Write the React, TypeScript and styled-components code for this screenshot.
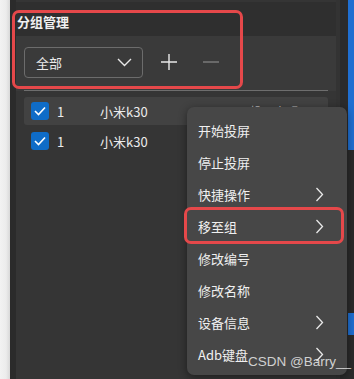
import { createGlobalStyle } from 'styled-components';
import styled from 'styled-components';

const GlobalStyle = createGlobalStyle`
  html, body {
    margin: 0;
    padding: 0;
    background: #ededed;
    font-family: "Microsoft YaHei", "Noto Sans CJK SC", "Noto Sans", sans-serif;
  }
`;

const Page = styled.div`
  position: relative;
  width: 354px;
  height: 379px;
  display: flex;
  overflow: hidden;
`;

const Gutter = styled.div`
  width: 10px;
  background: linear-gradient(to right, #f2f2f2 0%, #ececec 60%, #d8d8d8 100%);
`;

const Window = styled.div`
  flex: 1;
  display: flex;
  background: #2b2b2b;
  padding-left: 6px;
`;

const Panel = styled.div`
  width: 320px;
  display: flex;
  flex-direction: column;
  background: #3a3a3a;
`;

const Header = styled.div`
  height: 36px;
  background: #2f2f2f;
  display: flex;
  align-items: flex-end;
  padding: 0 0 4px 1px;
  box-sizing: border-box;
  border-top: 2px solid #353535;
`;

const Title = styled.div`
  color: #f0f0f0;
  font-size: 13px;
  font-weight: bold;
  line-height: 20px;
`;

const Controls = styled.div`
  height: 52px;
  display: flex;
  align-items: center;
  padding-left: 8px;
  gap: 10px;
  box-sizing: border-box;
`;

const Combo = styled.div`
  width: 119px;
  height: 31px;
  box-sizing: border-box;
  border: 1px solid #6c6c6c;
  border-radius: 4px;
  display: flex;
  align-items: center;
  justify-content: space-between;
  padding: 0 10px 0 11px;
  color: #eaeaea;
  font-size: 13px;
`;

const IconButton = styled.div<{ $dim?: boolean }>`
  width: 32px;
  height: 31px;
  display: flex;
  align-items: center;
  justify-content: center;
  color: ${(p) => (p.$dim ? '#8a8a8a' : '#e8e8e8')};
`;

const Divider = styled.div`
  height: 1px;
  margin: 2px 8px 0 8px;
  background: #6e6e6e;
`;

const List = styled.div`
  display: flex;
  flex-direction: column;
  gap: 2px;
  padding: 6px 8px 0 8px;
  background: #353535;
  flex: 1;
`;

const Row = styled.div<{ $hover?: boolean }>`
  height: 28px;
  display: flex;
  align-items: center;
  padding-left: 7px;
  border-radius: 3px;
  background: ${(p) => (p.$hover ? '#424242' : 'transparent')};
  color: #ececec;
  font-size: 13px;
  position: relative;
`;

const Check = styled.div`
  width: 18px;
  height: 18px;
  border-radius: 3px;
  background: #0f6cc7;
  display: flex;
  align-items: center;
  justify-content: center;
`;

const Num = styled.span`
  margin-left: 8px;
  width: 43px;
`;

const Status = styled.span`
  position: absolute;
  left: 226px;
  color: #bdbdbd;
  font-size: 12px;
`;

const RightRail = styled.div`
  flex: 1;
  display: flex;
  background: #2b2b2b;
  border-left: 4px solid #333333;
`;

const Blue = styled.div`
  margin-left: auto;
  width: 6px;
  display: flex;
  flex-direction: column;
`;

const BlueSeg = styled.div<{ $h: number; $on?: boolean }>`
  height: ${(p) => p.$h}px;
  background: ${(p) => (p.$on ? '#1f6fd1' : 'transparent')};
`;

const Menu = styled.div`
  position: absolute;
  left: 187px;
  top: 107px;
  width: 160px;
  height: 268px;
  box-sizing: border-box;
  padding-top: 7px;
  background: #474747;
  border-radius: 7px;
  box-shadow: 0 2px 8px rgba(0, 0, 0, 0.45);
  display: flex;
  flex-direction: column;
`;

const MenuItem = styled.div`
  height: 32px;
  display: flex;
  align-items: center;
  justify-content: space-between;
  padding: 0 23px 0 11px;
  color: #f0f0f0;
  font-size: 13px;
`;

const Highlight = styled.div<{ $l: number; $t: number; $w: number; $h: number }>`
  position: absolute;
  left: ${(p) => p.$l}px;
  top: ${(p) => p.$t}px;
  width: ${(p) => p.$w}px;
  height: ${(p) => p.$h}px;
  box-sizing: border-box;
  border: 3px solid #e5484a;
  border-radius: 7px;
  pointer-events: none;
`;

const Watermark = styled.div`
  position: absolute;
  left: 248px;
  top: 353px;
  color: rgba(235, 235, 235, 0.85);
  font-family: "Liberation Sans", Arial, sans-serif;
  font-size: 13.5px;
  line-height: 18px;
`;

const Chevron = () => (
  <svg width="9" height="15" viewBox="0 0 9 15">
    <path d="M1.5 1 L7.5 7.5 L1.5 14" fill="none" stroke="#e8e8e8" strokeWidth="1.3" />
  </svg>
);

const Tick = () => (
  <svg width="12" height="10" viewBox="0 0 12 10">
    <path d="M1 5 L4.5 8.5 L11 1.5" fill="none" stroke="#fff" strokeWidth="1.6" />
  </svg>
);

const rows = [
  { num: '1', name: '小米k30', hover: true },
  { num: '1', name: '小米k30', hover: false },
];

const menuItems = [
  { label: '开始投屏', sub: false },
  { label: '停止投屏', sub: false },
  { label: '快捷操作', sub: true },
  { label: '移至组', sub: true },
  { label: '修改编号', sub: false },
  { label: '修改名称', sub: false },
  { label: '设备信息', sub: true },
  { label: 'Adb键盘', sub: true },
];

export default function App() {
  return (
    <>
      <GlobalStyle />
      <Page>
        <Gutter />
        <Window>
          <Panel>
            <Header>
              <Title>分组管理</Title>
            </Header>
            <Controls>
              <Combo>
                <span>全部</span>
                <svg width="15" height="9" viewBox="0 0 15 9">
                  <path d="M1 1 L7.5 7.5 L14 1" fill="none" stroke="#e8e8e8" strokeWidth="1.4" />
                </svg>
              </Combo>
              <IconButton>
                <svg width="18" height="18" viewBox="0 0 18 18">
                  <path d="M9 1 V17 M1 9 H17" stroke="currentColor" strokeWidth="1.4" />
                </svg>
              </IconButton>
              <IconButton $dim>
                <svg width="16" height="4" viewBox="0 0 16 4">
                  <path d="M0 2 H16" stroke="currentColor" strokeWidth="1.2" />
                </svg>
              </IconButton>
            </Controls>
            <Divider />
            <List>
              {rows.map((r, i) => (
                <Row key={i} $hover={r.hover}>
                  <Check>
                    <Tick />
                  </Check>
                  <Num>{r.num}</Num>
                  <span>{r.name}</span>
                  {r.hover && <Status>投屏中 ○</Status>}
                </Row>
              ))}
            </List>
          </Panel>
          <RightRail>
            <Blue>
              <BlueSeg $h={150} $on />
              <BlueSeg $h={163} />
              <BlueSeg $h={22} $on />
            </Blue>
          </RightRail>
        </Window>
        <Highlight $l={12} $t={10} $w={231} $h={79} />
        <Menu>
          {menuItems.map((m) => (
            <MenuItem key={m.label}>
              <span>{m.label}</span>
              {m.sub && <Chevron />}
            </MenuItem>
          ))}
        </Menu>
        <Highlight $l={184} $t={207} $w={160} $h={37} />
        <Watermark>CSDN @Barry__</Watermark>
      </Page>
    </>
  );
}
